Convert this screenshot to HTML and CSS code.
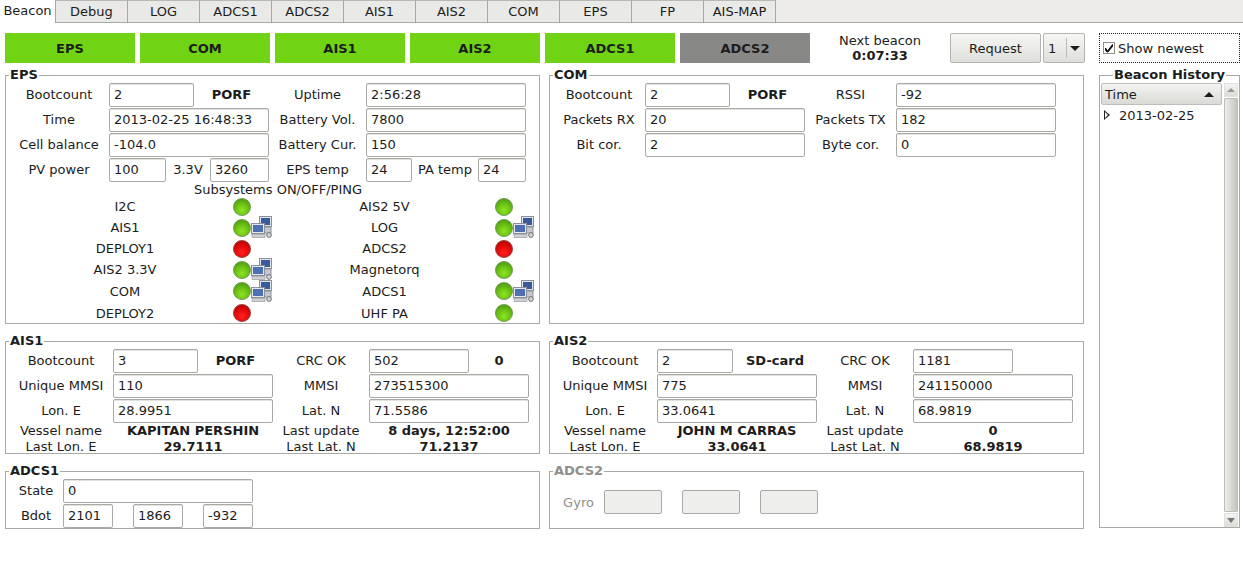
FILE: index.html
```html
<!DOCTYPE html>
<html lang="en">
<head>
<meta charset="utf-8">
<title>Beacon</title>
<link rel="stylesheet" href="styles.css">
</head>
<body>
<svg class="defs" width="0" height="0" aria-hidden="true">
  <symbol id="net" viewBox="0 0 22 22">
    <rect x="8.5" y="0.5" width="12" height="10" fill="#dfe2e6" stroke="#8a919c"/>
    <rect x="10" y="2" width="9" height="7" fill="#3a5a9c"/>
    <rect x="12" y="11" width="8" height="6" fill="#c4c7cb" stroke="#8f9399"/>
    <rect x="0.5" y="7.5" width="13" height="10" fill="#e4e6e9" stroke="#8a919c"/>
    <rect x="2" y="9" width="10" height="7" fill="#4f70b0"/>
    <rect x="1" y="18.5" width="13" height="3" fill="#cfd1d4" stroke="#9a9da2" stroke-width="0.7"/>
    <circle cx="18" cy="19" r="2.4" fill="#d0d1d3" stroke="#75787c"/>
  </symbol>
</svg>
<nav class="tabs">
  <span class="tab active">Beacon</span>
  <span class="tab">Debug</span>
  <span class="tab">LOG</span>
  <span class="tab">ADCS1</span>
  <span class="tab">ADCS2</span>
  <span class="tab">AIS1</span>
  <span class="tab">AIS2</span>
  <span class="tab">COM</span>
  <span class="tab">EPS</span>
  <span class="tab">FP</span>
  <span class="tab">AIS-MAP</span>
</nav>
<header class="toprow">
  <div class="statuses">
    <span class="status">EPS</span>
    <span class="status">COM</span>
    <span class="status">AIS1</span>
    <span class="status">AIS2</span>
    <span class="status">ADCS1</span>
    <span class="status off">ADCS2</span>
  </div>
  <div class="next"><span>Next beacon</span><b>0:07:33</b></div>
  <button class="btn">Request</button>
  <div class="combo"><span class="combo-val">1</span><span class="combo-arrow"></span></div>
  <label class="show">
    <svg class="check" width="12" height="12" viewBox="0 0 12 12"><rect x="0.5" y="0.5" width="11" height="11" fill="#fff" stroke="#8f8f8b"/><path d="M2.5 6 L4.5 9 L9.5 2.5 L9.5 4.5 L5 10 L4 10 L2.5 8 Z" fill="#111" stroke="#111"/></svg>
    <span>Show newest</span>
  </label>
</header>
<main class="main">
  <div class="panels">
    <section class="group h-big">
      <h2 class="title">EPS</h2>
      <div class="form eps">
        <span class="lbl">Bootcount</span><span class="field s2">2</span><b class="lbl s2">PORF</b><span class="lbl">Uptime</span><span class="field s3">2:56:28</span>
        <span class="lbl">Time</span><span class="field s4">2013-02-25 16:48:33</span><span class="lbl">Battery Vol.</span><span class="field s3">7800</span>
        <span class="lbl">Cell balance</span><span class="field s4">-104.0</span><span class="lbl">Battery Cur.</span><span class="field s3">150</span>
        <span class="lbl">PV power</span><span class="field">100</span><span class="lbl s2">3.3V</span><span class="field">3260</span><span class="lbl">EPS temp</span><span class="field">24</span><span class="lbl">PA temp</span><span class="field">24</span>
      </div>
      <div class="subhead">Subsystems ON/OFF/PING</div>
      <div class="subs">
        <span class="lbl">I2C</span><i class="led"></i><span></span><span class="lbl">AIS2 5V</span><i class="led"></i><span></span>
        <span class="lbl">AIS1</span><i class="led"></i><svg class="net"><use href="#net"/></svg><span class="lbl">LOG</span><i class="led"></i><svg class="net"><use href="#net"/></svg>
        <span class="lbl">DEPLOY1</span><i class="led red"></i><span></span><span class="lbl">ADCS2</span><i class="led red"></i><span></span>
        <span class="lbl">AIS2 3.3V</span><i class="led"></i><svg class="net"><use href="#net"/></svg><span class="lbl">Magnetorq</span><i class="led"></i><span></span>
        <span class="lbl">COM</span><i class="led"></i><svg class="net"><use href="#net"/></svg><span class="lbl">ADCS1</span><i class="led"></i><svg class="net"><use href="#net"/></svg>
        <span class="lbl">DEPLOY2</span><i class="led red"></i><span></span><span class="lbl">UHF PA</span><i class="led"></i><span></span>
      </div>
    </section>
    <section class="group h-big">
      <h2 class="title">COM</h2>
      <div class="form com">
        <span class="lbl">Bootcount</span><span class="field">2</span><b class="lbl">PORF</b><span class="lbl">RSSI</span><span class="field">-92</span>
        <span class="lbl">Packets RX</span><span class="field s2">20</span><span class="lbl">Packets TX</span><span class="field">182</span>
        <span class="lbl">Bit cor.</span><span class="field s2">2</span><span class="lbl">Byte cor.</span><span class="field">0</span>
      </div>
    </section>
    <section class="group h-mid">
      <h2 class="title">AIS1</h2>
      <div class="form ais ais1">
        <span class="lbl">Bootcount</span><span class="field">3</span><b class="lbl">PORF</b><span class="lbl">CRC OK</span><span class="field">502</span><b class="lbl">0</b>
        <span class="lbl">Unique MMSI</span><span class="field s2">110</span><span class="lbl">MMSI</span><span class="field s2">273515300</span>
        <span class="lbl">Lon. E</span><span class="field s2">28.9951</span><span class="lbl">Lat. N</span><span class="field s2">71.5586</span>
        <span class="lbl">Vessel name</span><b class="lbl s2">KAPITAN PERSHIN</b><span class="lbl">Last update</span><b class="lbl s2">8 days, 12:52:00</b>
        <span class="lbl">Last Lon. E</span><b class="lbl s2">29.7111</b><span class="lbl">Last Lat. N</span><b class="lbl s2">71.2137</b>
      </div>
    </section>
    <section class="group h-mid">
      <h2 class="title">AIS2</h2>
      <div class="form ais ais2">
        <span class="lbl">Bootcount</span><span class="field">2</span><b class="lbl">SD-card</b><span class="lbl">CRC OK</span><span class="field">1181</span><span></span>
        <span class="lbl">Unique MMSI</span><span class="field s2">775</span><span class="lbl">MMSI</span><span class="field s2">241150000</span>
        <span class="lbl">Lon. E</span><span class="field s2">33.0641</span><span class="lbl">Lat. N</span><span class="field s2">68.9819</span>
        <span class="lbl">Vessel name</span><b class="lbl s2">JOHN M CARRAS</b><span class="lbl">Last update</span><b class="lbl s2">0</b>
        <span class="lbl">Last Lon. E</span><b class="lbl s2">33.0641</b><span class="lbl">Last Lat. N</span><b class="lbl s2">68.9819</b>
      </div>
    </section>
    <section class="group h-small">
      <h2 class="title">ADCS1</h2>
      <div class="form adcs">
        <span class="lbl">State</span><span class="field s5">0</span>
        <span class="lbl">Bdot</span><span class="field">2101</span><span></span><span class="field">1866</span><span></span><span class="field">-932</span>
      </div>
    </section>
    <section class="group h-small disabled">
      <h2 class="title">ADCS2</h2>
      <div class="gyro">
        <span class="lbl gyro-lbl">Gyro</span><span class="field"></span><span class="field"></span><span class="field"></span>
      </div>
    </section>
  </div>
  <section class="group history">
    <h2 class="title">Beacon History</h2>
    <div class="tree">
      <div class="tree-body">
        <div class="tree-head"><span>Time</span><i class="up-arrow"></i></div>
        <div class="tree-row"><i class="expander"></i><span>2013-02-25</span></div>
      </div>
      <div class="scroll">
        <span class="sb-btn"><i class="sb-up"></i></span>
        <span class="sb-thumb"></span>
        <span class="sb-btn"><i class="sb-down"></i></span>
      </div>
    </div>
  </section>
</main>
</body>
</html>
```

FILE: styles.css
```css
* { box-sizing: border-box; }
html, body { margin: 0; padding: 0; }
body {
  width: 1243px;
  height: 566px;
  overflow: hidden;
  background: #fff;
  color: #1c1c1c;
  font: 13px/15px "DejaVu Sans", sans-serif;
}
.defs { position: absolute; }

.tabs {
  display: flex;
  height: 23px;
  background: #edecea;
  border-bottom: 1px solid #a8a8a4;
}
.tab {
  width: 72px;
  height: 23px;
  display: flex;
  align-items: center;
  justify-content: center;
  padding-bottom: 1px;
  background: #e9e9e7;
  border: 1px solid #a8a8a4;
  border-top-color: #b8b8b4;
  border-left-width: 0;
  border-bottom-width: 1px;
}
.tab.active {
  width: 56px;
  height: 23px;
  background: #fff;
  border: 0;
  padding-bottom: 2px;
  border-right: 1px solid #a8a8a4;
}

.toprow {
  display: flex;
  align-items: stretch;
  height: 30px;
  margin: 10px 0 0 5px;
}
.statuses { display: flex; gap: 5px; }
.status {
  width: 130px;
  display: flex;
  align-items: center;
  justify-content: center;
  font-weight: bold;
  background: #70d414;
}
.status.off { background: #888886; }
.next {
  width: 140px;
  display: flex;
  flex-direction: column;
  align-items: center;
  justify-content: center;
  gap: 1px;
  line-height: 14px;
}
.btn {
  width: 91px;
  padding: 0;
  font: inherit;
  color: inherit;
  border: 1px solid #b3b3af;
  border-radius: 2px;
  background: linear-gradient(#f6f6f4, #dededb);
}
.combo {
  width: 42px;
  margin-left: 2px;
  display: flex;
  align-items: center;
  border: 1px solid #b3b3af;
  border-radius: 2px;
  background: linear-gradient(#f6f6f4, #dededb);
}
.combo-val { width: 22px; padding-left: 4px; }
.combo-arrow {
  width: 18px;
  height: 20px;
  border-left: 1px solid #bcbcb8;
  position: relative;
}
.combo-arrow::after {
  content: "";
  position: absolute;
  left: 3px;
  top: 8px;
  border: 5px solid transparent;
  border-top: 5px solid #1c1c1c;
  border-bottom: 0;
}
.show {
  width: 141px;
  margin-left: 14px;
  display: flex;
  align-items: center;
  gap: 3px;
  padding-left: 3px;
  border: 1px dotted #222;
}
.check { flex: none; }

.main {
  display: flex;
  margin: 12px 0 0 5px;
}
.panels {
  width: 1079px;
  display: grid;
  grid-template-columns: 535px 535px;
  column-gap: 9px;
  row-gap: 17px;
  align-content: start;
}
.group {
  position: relative;
  border: 1px solid #a9a9a5;
  padding-top: 7px;
}
.h-big { height: 249px; }
.h-mid { height: 113px; }
.h-small { height: 58px; }
.title {
  position: absolute;
  left: 3px;
  top: -9px;
  margin: 0;
  padding: 0 1px;
  background: #fff;
  font-size: 13px;
  line-height: 15px;
  font-weight: bold;
}

.form {
  display: grid;
  grid-auto-rows: 24px;
  row-gap: 1px;
  padding-left: 3px;
  align-items: center;
}
.form .lbl { margin-bottom: 2px; }
.eps { grid-template-columns: 100px 57px 28px 16px 59px 97px 46px 66px 48px; }
.com { grid-template-columns: 92px 85px 75px 91px 160px; }
.ais { grid-template-rows: 24px 24px 24px 14px 16px; }
.ais1 { grid-template-columns: 104px 85px 75px 96px 100px 60px; }
.ais2 { grid-template-columns: 104px 76px 84px 96px 100px 60px; }
.adcs { grid-template-columns: 54px 50px 20px 50px 20px 50px; }

.lbl { text-align: center; white-space: nowrap; }
.field {
  height: 24px;
  padding: 0 4px;
  line-height: 21px;
  background: #fff;
  border: 1px solid #a9a9a5;
  border-radius: 2px;
  box-shadow: inset 0 1px 0 #e2e2df;
  white-space: nowrap;
  overflow: hidden;
}
.s2 { grid-column: span 2; }
.s3 { grid-column: span 3; }
.s4 { grid-column: span 4; }
.s5 { grid-column: span 5; }

.subhead {
  height: 15px;
  padding-left: 188px;
  white-space: nowrap;
}
.subs {
  display: grid;
  grid-template-columns: 216px 18px 23px 221px 18px 22px;
  grid-template-rows: 21px 21px 21px 21px 22px 22px;
  padding-left: 11px;
  margin-top: -1px;
  align-items: center;
}
.led {
  display: block;
  width: 18px;
  height: 18px;
  border-radius: 50%;
  border: 1px solid #6b9a4e;
  background: radial-gradient(circle at 50% 70%, #8ee426 0, #6cc212 45%, #55a414 75%, #6a9f44 100%);
}
.led.red {
  border-color: #9a3a3a;
  background: radial-gradient(circle at 50% 70%, #ff2020 0, #e00808 50%, #b80606 80%, #a83030 100%);
}
.net { display: block; width: 22px; height: 22px; margin-top: -1px; }

.disabled { color: #8f8f8b; }
.gyro {
  display: flex;
  gap: 20px;
  padding: 11px 0 0 3px;
  align-items: center;
}
.gyro-lbl { width: 51px; margin-right: -20px; }
.disabled .field {
  width: 58px;
  background: #eeeeec;
  box-shadow: none;
}

.history {
  width: 141px;
  height: 453px;
  margin: 0 0 0 15px;
}
.history .title { left: 13px; }
.tree {
  display: flex;
  height: 444px;
  padding-left: 1px;
}
.tree-body { width: 121px; }
.tree-head {
  display: flex;
  align-items: center;
  justify-content: space-between;
  height: 22px;
  padding: 0 7px 0 3px;
  border: 1px solid #bdbdb9;
  border-radius: 2px;
  background: linear-gradient(#f4f4f2, #d9d9d6);
}
.up-arrow {
  border: 5px solid transparent;
  border-top: 0;
  border-bottom: 5px solid #1c1c1c;
}
.tree-row {
  display: flex;
  align-items: center;
  gap: 9px;
  height: 20px;
  padding-left: 3px;
}
.expander {
  width: 0;
  height: 0;
  flex: none;
  position: relative;
  border-left: 6px solid #222;
  border-top: 5px solid transparent;
  border-bottom: 5px solid transparent;
}
.expander::after {
  content: "";
  position: absolute;
  left: -5px;
  top: -3px;
  border-left: 3px solid #fff;
  border-top: 3px solid transparent;
  border-bottom: 3px solid transparent;
}
.scroll {
  width: 14px;
  margin-left: 2px;
  display: flex;
  flex-direction: column;
  gap: 1px;
}
.sb-btn {
  height: 14px;
  display: flex;
  align-items: center;
  justify-content: center;
  background: linear-gradient(#f4f4f2, #dcdcd9);
  border: 1px solid #e0e0dd;
}
.sb-thumb {
  flex: 1;
  background: linear-gradient(90deg, #ececea, #c4c4c0);
  border: 1px solid #bcbcb8;
  border-radius: 1px;
}
.sb-up, .sb-down { border: 4px solid transparent; }
.sb-up { border-top: 0; border-bottom: 4px solid #999; }
.sb-down { border-bottom: 0; border-top: 5px solid #777; }
```
